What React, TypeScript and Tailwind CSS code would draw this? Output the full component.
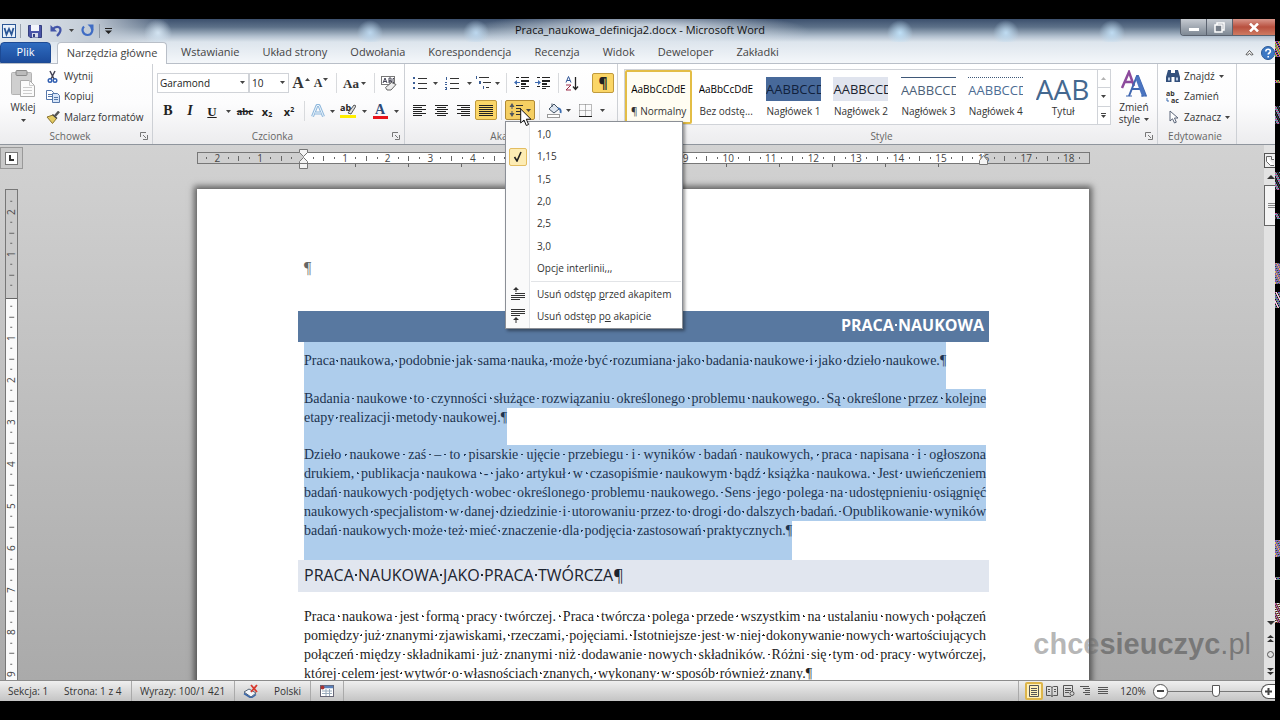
import { Fragment, type ReactNode } from 'react'
import clsx from 'clsx'

const tabs = ['Wstawianie', 'Układ strony', 'Odwołania', 'Korespondencja', 'Recenzja', 'Widok', 'Deweloper', 'Zakładki']

const spacings = ['1,0', '1,15', '1,5', '2,0', '2,5', '3,0']

interface StyleItem {
    name: string
    sample: string
    sampleClass: string
    selected?: boolean
}

const styleItems: StyleItem[] = [
    { name: '¶ Normalny', sample: 'AaBbCcDdE', sampleClass: 'text-[10px] text-black', selected: true },
    { name: 'Bez odstę...', sample: 'AaBbCcDdE', sampleClass: 'text-[10px] text-black' },
    { name: 'Nagłówek 1', sample: 'AABBCCD', sampleClass: 'bg-[#47699a] text-[13px] text-[#10213c]' },
    { name: 'Nagłówek 2', sample: 'AABBCCD', sampleClass: 'bg-[#e0e4ee] text-[13px] text-[#1c2430]' },
    { name: 'Nagłówek 3', sample: 'AABBCCD', sampleClass: 'border-t border-[#3f5878] text-[13px] text-[#4c5f78]' },
    { name: 'Nagłówek 4', sample: 'AABBCCD', sampleClass: 'border-t border-dotted border-[#3f5878] text-[13px] text-[#4c6d94]' },
    { name: 'Tytuł', sample: 'AAB', sampleClass: 'text-[28px] text-[#44688f]' },
]

function Caret({ className }: { className?: string }) {
    return (
        <svg viewBox="0 0 5 3" className={clsx('h-[3px] w-[5px] shrink-0', className)} fill="#444">
            <path d="M0 0h5L2.5 3z" />
        </svg>
    )
}

function Drop({ label, className = 'w-2' }: { label: string; className?: string }) {
    return (
        <button aria-label={label} className={clsx('flex h-5 shrink-0 items-center justify-center', className)}>
            <Caret />
        </button>
    )
}

function Sep({ className }: { className: string }) {
    return (
        <span className={clsx('flex h-5 shrink-0 justify-center', className)}>
            <span className="w-px bg-[#d8dadd]" />
        </span>
    )
}

function Tool({ label, className, children }: { label: string; className: string; children: ReactNode }) {
    return (
        <button aria-label={label} className={clsx('flex h-5 shrink-0 items-center justify-center leading-none', className)}>
            {children}
        </button>
    )
}

function Launcher() {
    return (
        <svg viewBox="0 0 8 8" className="h-2 w-2" fill="none" stroke="#777">
            <path d="M.5 5V.5H6M3 3l3 3M7.5 3v4.5H3" />
        </svg>
    )
}

function Group({ name, className, launcher, children }: { name: string; className: string; launcher?: boolean; children: ReactNode }) {
    return (
        <section aria-label={name} className={clsx('flex flex-col border-r border-[#cdd0d5]', className)}>
            <div className="flex min-h-0 flex-1">{children}</div>
            <div className="flex h-4 items-center pr-1">
                <span className="flex-1 text-center text-[#666]">{name}</span>
                {launcher && <button aria-label={`${name} – opcje`}><Launcher /></button>}
            </div>
        </section>
    )
}

// rows of text drawn as horizontal bars: [x, y, width]
function Bars({ rows, color = '#222' }: { rows: number[][]; color?: string }) {
    return (
        <svg viewBox="0 0 16 14" className="h-[14px] w-4" fill={color}>
            {rows.map(([x, y, w]) => <rect key={y} x={x} y={y} width={w} height="1" />)}
        </svg>
    )
}

const alignRows = {
    left: [[1, 2, 13], [1, 4, 9], [1, 6, 13], [1, 8, 9], [1, 10, 13], [1, 12, 9]],
    center: [[1, 2, 13], [3, 4, 9], [1, 6, 13], [3, 8, 9], [1, 10, 13], [3, 12, 9]],
    right: [[1, 2, 13], [5, 4, 9], [1, 6, 13], [5, 8, 9], [1, 10, 13], [5, 12, 9]],
    justify: [[1, 2, 14], [1, 4, 14], [1, 6, 14], [1, 8, 14], [1, 10, 14], [1, 12, 14]],
}

function TitleBar() {
    return (
        <header className="flex h-[23px] shrink-0 bg-[radial-gradient(circle_at_158px_14px,#d3e4f2_0,transparent_14px),radial-gradient(circle_at_370px_14px,#bcd7ee_0,transparent_13px),radial-gradient(circle_at_476px_14px,#bcd7ee_0,transparent_13px),radial-gradient(circle_at_900px_14px,#bfe0f7_0,transparent_13px),radial-gradient(circle_at_1006px_14px,#bfdcf2_0,transparent_13px),radial-gradient(circle_at_1112px_14px,#bfdcf2_0,transparent_13px),radial-gradient(ellipse_170px_20px_at_640px_12px,#dfe7efcc_30%,transparent),linear-gradient(to_right,#e4eaf0_0,#c3ccd6_90px,transparent_170px),linear-gradient(to_bottom,#3c506d_0,#5d7189_35%,#b1bfce_75%,#dde5ed)]">
            <div className="flex items-center pl-[2px]">
                <svg viewBox="0 0 14 14" className="h-[14px] w-[14px]">
                    <rect x=".5" y=".5" width="13" height="13" fill="#e9f1fa" stroke="#2b5797" />
                    <path d="M2.500 4l2 6.500L7 5l2.500 5.500L11.500 4" fill="none" stroke="#2b5797" strokeWidth="1.800" />
                </svg>
                <span className="mx-1 h-[14px] w-px bg-[#9aa3af]" />
                <button aria-label="Zapisz" className="ml-[3px]">
                    <svg viewBox="0 0 14 14" className="h-[14px] w-[14px]">
                        <path d="M.5 1.500h13v12H2l-1.500-1.500z" fill="#4b55a8" stroke="#35407f" />
                        <rect x="3" y="1" width="8" height="6" fill="#f3f5fb" />
                        <rect x="4" y="9" width="6" height="4.500" fill="#d8dcec" />
                        <rect x="5" y="10" width="2" height="3" fill="#35407f" />
                    </svg>
                </button>
                <button aria-label="Cofnij" className="ml-2">
                    <svg viewBox="0 0 13 13" className="h-[13px] w-[13px]" fill="none" stroke="#4355a8" strokeWidth="2.200">
                        <path d="M3 5C5 2 10.500 2 10.500 6c0 2.500-1.500 4-3.500 6" />
                        <path d="M.5 1v6.500H7z" fill="#4355a8" stroke="none" />
                    </svg>
                </button>
                <Drop label="Lista cofania" className="ml-1 w-2" />
                <button aria-label="Powtórz" className="ml-[6px]">
                    <svg viewBox="0 0 13 13" className="h-[13px] w-[13px]" fill="none" stroke="#3f6cc4" strokeWidth="2.200">
                        <path d="M3 2.500c-3 3-1 8.500 3.500 8.500s6-5 3.500-8" />
                        <path d="M6.500.5h6v6z" fill="#3f6cc4" stroke="none" />
                    </svg>
                </button>
                <span className="mx-[5px] h-[14px] w-px bg-[#8d97a5]" />
                <svg viewBox="0 0 7 6" className="h-[6px] w-[7px]" fill="#222">
                    <path d="M0 0h7v1H0zM0 2.500h7L3.500 6z" />
                </svg>
            </div>
            <h1 className="flex-1 pr-3 text-center text-[11px] leading-[22px] text-[#111]">Praca_naukowa_definicja2.docx - Microsoft Word</h1>
            <div className="flex h-[17px] overflow-hidden rounded-bl border-b border-l border-[#5b6370]">
                <button aria-label="Minimalizuj" className="flex w-[26px] items-end justify-center border-r border-[#5b6370] bg-linear-to-b from-[#c5cad1] to-[#7f8995] pb-[4px]">
                    <span className="h-[3px] w-[10px] bg-white" />
                </button>
                <button aria-label="Przywróć" className="flex w-[26px] items-center justify-center border-r border-[#5b6370] bg-linear-to-b from-[#c5cad1] to-[#7f8995]">
                    <svg viewBox="0 0 11 11" className="h-[11px] w-[11px]" fill="#777f8a" stroke="#fff" strokeWidth="1.500">
                        <rect x="3" y="1" width="7" height="7" />
                        <rect x="1" y="3" width="7" height="7" />
                    </svg>
                </button>
                <button aria-label="Zamknij" className="flex w-[42px] items-center justify-center bg-linear-to-b from-[#d9978c] via-[#b8503f] to-[#cf7a62]">
                    <svg viewBox="0 0 10 9" className="h-[9px] w-[10px]" stroke="#fff" strokeWidth="2.500">
                        <path d="M1 .5l8 8M9 .5l-8 8" />
                    </svg>
                </button>
            </div>
        </header>
    )
}

function TabRow() {
    return (
        <nav className="flex h-[22px] shrink-0 items-stretch border-b border-[#b9bfc8] bg-linear-to-b from-[#dde5ed] to-[#f4f7fa] text-[#444]">
            <button className="w-[51px] rounded-t-sm border border-[#1d4a94] bg-linear-to-b from-[#2f6cc0] to-[#1c4c9c] text-white">Plik</button>
            <button className="-mb-px ml-[6px] w-[110px] rounded-t-sm border border-b-0 border-[#b9bfc8] bg-white">Narzędzia główne</button>
            <div className="ml-[3px] flex flex-1 gap-px">
                {tabs.map(tab => <button key={tab} className="px-[11px]">{tab}</button>)}
            </div>
            <button aria-label="Minimalizuj wstążkę" className="mr-[7px]">
                <svg viewBox="0 0 9 7" className="h-[7px] w-[9px]" fill="#fff" stroke="#555">
                    <path d="M1 5.500L4.500 1.500 8 5.500 6.500 6 4.500 4.500 2.500 6z" />
                </svg>
            </button>
            <button aria-label="Pomoc" className="w-[14px] overflow-hidden">
                <svg viewBox="0 0 14 14" className="h-[14px] w-[14px]">
                    <circle cx="7" cy="7" r="6.500" fill="#3c78c4" stroke="#2b5a98" />
                    <path d="M4.800 5.500c0-3 4.600-2.800 4.600-.2C9.400 7 7.200 7 7.200 8.500M7.200 10v1.600" fill="none" stroke="#fff" strokeWidth="1.600" />
                </svg>
            </button>
        </nav>
    )
}

function Clipboard() {
    return (
        <Group name="Schowek" className="w-[153px]" launcher>
            <button className="flex w-[46px] flex-col items-center pt-[5px]">
                <svg viewBox="0 0 26 28" className="h-7 w-[26px]">
                    <rect x="1.500" y="3.500" width="20" height="22" rx="1" fill="#cfcfcf" stroke="#b3b3b3" />
                    <rect x="6" y="1.500" width="11" height="5" rx="1" fill="#bbb" stroke="#888" />
                    <path d="M10.500 11.500h9l5 5v11h-14z" fill="#fbfbfb" stroke="#aaa" />
                    <path d="M19.500 11.500v5h5M13 18.500h9M13 21.500h9M13 24.500h9" fill="none" stroke="#ccc" />
                </svg>
                <span className="mt-[2px] leading-4">Wklej</span>
                <Caret className="mt-1" />
            </button>
            <div className="flex flex-col pt-[2px]">
                <button className="flex h-5 items-center gap-[5px]">
                    <svg viewBox="0 0 13 13" className="h-[13px] w-[13px]" fill="none">
                        <path d="M4 1l4 8M9 1L5 9" stroke="#445" strokeWidth="1.500" />
                        <circle cx="4" cy="10.500" r="1.800" stroke="#2f5db0" strokeWidth="1.400" />
                        <circle cx="9" cy="10.500" r="1.800" stroke="#2f5db0" strokeWidth="1.400" />
                    </svg>
                    Wytnij
                </button>
                <button className="flex h-[21px] items-center gap-1">
                    <svg viewBox="0 0 14 13" className="h-[13px] w-[14px]" fill="#fff" stroke="#5577aa">
                        <path d="M.5.5h5l2 2v7h-7zM2 4.500h4M2 6.500h4" />
                        <path d="M6.500 3.500h5l2 2v7h-7zM8 7.500h4M8 9.500h4" fill="#d7e5f8" />
                    </svg>
                    Kopiuj
                </button>
                <button className="flex h-5 items-center gap-1">
                    <svg viewBox="0 0 14 13" className="h-[13px] w-[14px]">
                        <path d="M9 5l4-4.500" stroke="#555" strokeWidth="2.500" />
                        <path d="M1 6l6-2 3.500 3.500-4 5z" fill="#e4cb62" stroke="#8a7430" />
                        <path d="M6.500 3.500l4.500 4" stroke="#444" strokeWidth="1.500" />
                    </svg>
                    Malarz formatów
                </button>
            </div>
        </Group>
    )
}

function Combo({ label, value, className }: { label: string; value: string; className: string }) {
    return (
        <div className={clsx('relative', className)}>
            <select aria-label={label} className="h-5 w-full appearance-none border border-[#d0d3d8] bg-white pl-[2px] leading-none text-[#222]">
                <option>{value}</option>
            </select>
            <Caret className="pointer-events-none absolute top-2 right-1" />
        </div>
    )
}

function FontGroup() {
    return (
        <Group name="Czcionka" className="w-[252px]" launcher>
            <div className="flex flex-col pl-1">
                <div className="flex pt-[9px]">
                    <Combo label="Czcionka" value="Garamond" className="w-[92px]" />
                    <Combo label="Rozmiar czcionki" value="10" className="w-10" />
                    <Tool label="Zwiększ czcionkę" className="w-6 gap-px font-['Liberation_Serif',serif] text-base font-bold text-[#333]">
                        A<Caret className="mb-2 rotate-180" />
                    </Tool>
                    <Tool label="Zmniejsz czcionkę" className="w-4 gap-px font-['Liberation_Serif',serif] text-xs font-bold text-[#333]">
                        A<Caret className="mb-2" />
                    </Tool>
                    <Sep className="w-[14px]" />
                    <Tool label="Zmień wielkość liter" className="w-4 font-['Liberation_Serif',serif] text-[13px] font-bold text-[#333]">Aa</Tool>
                    <Drop label="Wielkość liter" />
                    <Sep className="w-[14px]" />
                    <Tool label="Wyczyść formatowanie" className="w-4">
                        <svg viewBox="0 0 16 15" className="h-[15px] w-4" fill="none" stroke="#445">
                            <rect x=".5" y=".5" width="13" height="8" fill="#fff" stroke="#777" />
                            <path d="M2 7l2-5 2 5M3 5.500h2M8 2v5h2.500v-2H8h2V2zM13 2.500h-1v4h1" />
                            <path d="M4.500 11.500l6-5 4.500 2-5 5.500H6z" fill="#eee" stroke="#666" />
                        </svg>
                    </Tool>
                </div>
                <div className="flex pt-2 text-[#222]">
                    <Tool label="Pogrubienie" className="w-[22px] font-['Liberation_Serif',serif] text-sm font-bold">B</Tool>
                    <Tool label="Kursywa" className="w-[22px] font-['Liberation_Serif',serif] text-sm font-bold italic">I</Tool>
                    <Tool label="Podkreślenie" className="w-[22px] font-['Liberation_Serif',serif] text-[13px] font-bold underline">U</Tool>
                    <Drop label="Styl podkreślenia" className="w-[11px]" />
                    <Tool label="Przekreślenie" className="w-[22px] font-['Liberation_Serif',serif] text-[11px] font-bold line-through">abc</Tool>
                    <Tool label="Indeks dolny" className="w-[22px] text-[11px] font-bold"><span>x<sub className="text-[7px]">2</sub></span></Tool>
                    <Tool label="Indeks górny" className="w-[22px] text-[11px] font-bold"><span>x<sup className="text-[7px]">2</sup></span></Tool>
                    <Sep className="w-2" />
                    <Tool label="Efekty tekstowe" className="w-5">
                        <svg viewBox="0 0 14 14" className="h-[14px] w-[14px]" fill="none" strokeLinejoin="round">
                            <path d="M1.500 12.500L6 1.500h2l4.500 11M4 9h6" stroke="#8fb8dc" strokeWidth="3" />
                            <path d="M1.500 12.500L6 1.500h2l4.500 11M4 9h6" stroke="#eef6fd" />
                        </svg>
                    </Tool>
                    <Drop label="Lista efektów" />
                    <Tool label="Kolor wyróżnienia" className="w-6">
                        <svg viewBox="0 0 16 16" className="h-4 w-4">
                            <rect y="12" width="16" height="3" fill="#ffee00" />
                            <text x="0" y="8" fontSize="9" fontWeight="bold" fill="#222">ab</text>
                            <path d="M8 10l6-8 2 1-5 8z" fill="#ddd" stroke="#555" />
                        </svg>
                    </Tool>
                    <Drop label="Lista kolorów wyróżnienia" />
                    <Tool label="Kolor czcionki" className="w-6">
                        <span className="flex h-4 w-[15px] items-start justify-center border-b-3 border-[#e8141c] font-['Liberation_Serif',serif] text-sm leading-[13px] font-bold text-[#2c4a78]">A</span>
                    </Tool>
                    <Drop label="Lista kolorów czcionki" />
                </div>
            </div>
        </Group>
    )
}

function IndentIcon({ out }: { out?: boolean }) {
    return (
        <svg viewBox="0 0 16 14" className="h-[14px] w-4" fill="#222">
            <path d="M2 1h3v1H2zM7 1h8v1H7zM7 4h8v2H7zM7 7h5v2H7zM2 10h3v1H2zM7 10h8v1H7zM7 12h4v1H7z" />
            <path d={out ? 'M0 6.500L3 4v2h3v1H3v2z' : 'M6 6.500L3 4v2H0v1h3v2z'} fill="#3c6ab0" />
        </svg>
    )
}

function LineSpacingIcon() {
    return (
        <svg viewBox="0 0 14 14" className="h-[14px] w-[14px]" fill="#333">
            <path d="M3 0l2.500 4h-2v2h-1V4h-2zM3 14l2.500-4h-2V8h-1v2h-2z" fill="#4d5560" />
            <path d="M7 2h7v1H7zM7 5h5v1H7zM7 8h7v1H7zM7 11h5v1H7z" />
        </svg>
    )
}

function SpacingMenu() {
    return (
        <div role="menu" className="absolute top-[21px] left-0 z-20 flex w-[178px] flex-col border border-[#8b8f96] bg-[linear-gradient(to_right,#fafafa_23px,#e2e4e7_23px,#e2e4e7_24px,#fff_24px)] px-px pt-px pb-px whitespace-nowrap text-[#333] shadow-[2px_2px_3px_#0006]">
            <div className="flex h-[157px] flex-col">
                {spacings.map(value => (
                    <button key={value} role="menuitemradio" aria-checked={value === '1,15'} className="flex flex-1 items-center">
                        <span className={clsx('ml-[2px] flex h-[18px] w-[18px] items-center justify-center', value === '1,15' && 'rounded-xs border border-[#e3bd61] bg-[#fdecb4]')}>
                            {value === '1,15' && (
                                <svg viewBox="0 0 10 11" className="h-[11px] w-[10px]" fill="none" stroke="#222" strokeWidth="1.600">
                                    <path d="M1.500 6l2.500 4 4-9" />
                                </svg>
                            )}
                        </span>
                        <span className="ml-[10px]">{value}</span>
                    </button>
                ))}
                <button role="menuitem" className="flex flex-1 items-center pl-[30px]">Opcje interlinii,,,</button>
            </div>
            <hr className="my-px ml-6 border-[#e2e4e7]" />
            <button role="menuitem" className="flex h-[22px] items-center">
                <svg viewBox="0 0 14 14" className="ml-1 h-[14px] w-[14px] shrink-0" fill="#333">
                    <path d="M5 0l3 3H5.500v2h-1V3H2zM4 6h10v1H4zM0 8h14v1H0zM0 10h14v1H0zM0 12h9v1H0z" />
                </svg>
                <span className="ml-3">Usuń odstęp <u>p</u>rzed akapitem</span>
            </button>
            <button role="menuitem" className="flex h-[22px] items-center">
                <svg viewBox="0 0 14 14" className="ml-1 h-[14px] w-[14px] shrink-0" fill="#333">
                    <path d="M0 0h14v1H0zM0 2h14v1H0zM0 4h14v1H0zM0 6h9v1H0zM5 8l3 3H5.500v3h-1v-3H2z" />
                </svg>
                <span className="ml-3">Usuń odstęp p<u>o</u> akapicie</span>
            </button>
        </div>
    )
}

function ParagraphGroup() {
    return (
        <Group name="Akapit" className="w-[213px]" launcher>
            <div className="flex flex-col pl-1">
                <div className="flex pt-[9px]">
                    <Tool label="Punktory" className="w-[22px]">
                        <svg viewBox="0 0 14 13" className="h-[13px] w-[14px]" fill="#333">
                            <path d="M5 1h9v1H5zM5 6h9v1H5zM5 11h9v1H5z" />
                            <path d="M0 0h2v2H0zM0 5h2v2H0zM0 10h2v2H0z" fill="#3c5f96" />
                        </svg>
                    </Tool>
                    <Drop label="Lista punktorów" />
                    <Tool label="Numerowanie" className="w-[26px]">
                        <svg viewBox="0 0 14 13" className="h-[13px] w-[14px]" fill="#333">
                            <path d="M5 1h9v1H5zM5 6h9v1H5zM5 11h9v1H5z" />
                            <path d="M1 0h1v3H1zM0 5h2v1H1v1h1v1H0V7h1V6H0zM0 10h2v3H0v-1h1v-1H0z" fill="#3c5f96" />
                        </svg>
                    </Tool>
                    <Drop label="Lista numerowania" />
                    <Tool label="Lista wielopoziomowa" className="w-5">
                        <svg viewBox="0 0 16 14" className="h-[14px] w-4" fill="#333">
                            <path d="M4 1h10v1H4zM8 6h8v1H8zM11 11h3v1h-3z" />
                            <path d="M1 0h1v3H1zM4 5h2v3H4zM8 10h1v3H8z" fill="#3c5f96" />
                        </svg>
                    </Tool>
                    <Drop label="Listy wielopoziomowe" />
                    <Sep className="w-[10px]" />
                    <Tool label="Zmniejsz wcięcie" className="w-[22px]"><IndentIcon out /></Tool>
                    <Tool label="Zwiększ wcięcie" className="w-5"><IndentIcon /></Tool>
                    <Sep className="w-[10px]" />
                    <Tool label="Sortuj" className="w-[18px]">
                        <svg viewBox="0 0 14 15" className="h-[15px] w-[14px]" fill="none">
                            <path d="M1 6.500L3.500.5 6 6.500M2 4.500h3" stroke="#2f5597" />
                            <path d="M1 9h5l-5 5h5" stroke="#9c2f4a" />
                            <path d="M10.500 1v12M8 10.500l2.500 3 2.500-3" stroke="#222" strokeWidth="1.300" />
                        </svg>
                    </Tool>
                    <Tool label="Pokaż wszystko" className="ml-[11px] w-[22px] rounded-xs border border-[#c09a3d] bg-[#fbd667] text-sm font-bold text-[#222]">¶</Tool>
                </div>
                <div className="flex pt-[7px]">
                    <Tool label="Wyrównaj do lewej" className="w-[22px]"><Bars rows={alignRows.left} /></Tool>
                    <Tool label="Wyśrodkuj" className="w-[22px]"><Bars rows={alignRows.center} /></Tool>
                    <Tool label="Wyrównaj do prawej" className="w-[22px]"><Bars rows={alignRows.right} /></Tool>
                    <Tool label="Wyjustuj" className="w-[22px] rounded-xs border border-[#c09a3d] bg-[#fbd667]"><Bars rows={alignRows.justify} /></Tool>
                    <Sep className="w-2" />
                    <div className="relative">
                        <Tool label="Interlinia" className="w-[30px] gap-[3px] rounded-xs border border-[#b08a35] bg-[#f5cf62]">
                            <LineSpacingIcon />
                            <Caret />
                        </Tool>
                        <SpacingMenu />
                        <svg viewBox="0 0 12 19" className="absolute top-2 left-[15px] z-30 h-[19px] w-3" fill="#fff" stroke="#111">
                            <path d="M.7 1v14l3.300-3 2.300 5.500 2.300-1-2.300-5.300h4.600z" />
                        </svg>
                    </div>
                    <Sep className="w-[9px]" />
                    <Tool label="Cieniowanie" className="w-5">
                        <svg viewBox="0 0 16 15" className="h-[15px] w-4">
                            <path d="M3 6l5-5 5 5-5 4z" fill="#dfe6f0" stroke="#456" />
                            <path d="M12 5c3 1 3 3 2.500 5" fill="none" stroke="#3a6cb0" strokeWidth="1.800" />
                            <path d="M6 4V.5" stroke="#456" />
                            <rect x="1.500" y="11.500" width="12" height="3" fill="#fff" stroke="#999" />
                        </svg>
                    </Tool>
                    <Drop label="Lista cieniowania" />
                    <Tool label="Krawędzie" className="w-[26px]">
                        <svg viewBox="0 0 13 13" className="h-[13px] w-[13px]" fill="none" stroke="#777" strokeDasharray="1 1">
                            <path d="M.5.5h12M.5 6.500h12M.5.5v12M6.500.5v12M12.500.5v12" />
                            <path d="M0 12.500h13" stroke="#222" strokeDasharray="none" />
                        </svg>
                    </Tool>
                    <Drop label="Lista krawędzi" />
                </div>
            </div>
        </Group>
    )
}

function StylesGroup() {
    return (
        <Group name="Style" className="min-w-0 flex-1" launcher>
            <div className="mt-[5px] ml-[6px] flex h-[56px] min-w-0 flex-1 border border-[#d0d3d8] bg-white">
                {styleItems.map(item => (
                    <button
                        key={item.name}
                        className={clsx(
                            'flex min-w-0 flex-1 flex-col items-center rounded-xs border-2 pt-[5px]',
                            item.selected ? 'border-[#e3bd45] bg-[#fffdf2]' : 'border-transparent',
                        )}
                    >
                        <span className={clsx('h-6 w-[55px] overflow-hidden text-left leading-[24px] whitespace-nowrap', item.sampleClass)}>
                            {item.sample}
                        </span>
                        <span className="mt-[2px] leading-4 whitespace-nowrap">{item.name}</span>
                    </button>
                ))}
                <div className="flex w-[13px] flex-col border-l border-[#d0d3d8]">
                    <button aria-label="Wiersz w górę" className="flex flex-1 items-center justify-center"><Caret className="rotate-180 opacity-40" /></button>
                    <button aria-label="Wiersz w dół" className="flex flex-1 items-center justify-center border-y border-[#d0d3d8]"><Caret /></button>
                    <button aria-label="Więcej" className="flex flex-1 flex-col items-center justify-center gap-px">
                        <span className="h-px w-[5px] bg-[#444]" />
                        <Caret />
                    </button>
                </div>
            </div>
            <button className="flex w-[46px] flex-col items-center pt-[6px]">
                <svg viewBox="0 0 28 28" className="h-7 w-7" fill="none">
                    <path d="M2 18L9 2l5 14M4 12h9" stroke="#8c4a9c" strokeWidth="2.500" />
                    <path d="M9 26l8-20h1l8 20M12 19h11" stroke="#3f66b0" strokeWidth="2" />
                    <path d="M17 7l7 19" stroke="#4a74c0" strokeWidth="4" />
                    <path d="M6 26h6M21 26h6" stroke="#3f66b0" />
                </svg>
                <span className="mt-[3px] leading-3">Zmień</span>
                <span className="flex items-center gap-1 leading-3">style <Caret /></span>
            </button>
        </Group>
    )
}

function EditGroup() {
    return (
        <Group name="Edytowanie" className="w-[79px]">
            <div className="flex flex-col pt-[2px] pl-2">
                <button className="flex h-5 items-center gap-1">
                    <svg viewBox="0 0 14 12" className="h-3 w-[14px]" fill="#33507c">
                        <path d="M2 0h3v3h4V0h3l2 7v5H8.500V7h-3v5H0V7z" />
                        <path d="M2 7.500h2v3H2zM10 7.500h2v3h-2z" fill="#b9cbe4" />
                    </svg>
                    Znajdź <Caret />
                </button>
                <button className="flex h-[21px] items-center gap-1">
                    <svg viewBox="0 0 14 14" className="h-[14px] w-[14px]" fill="#333">
                        <text x="0" y="6" fontSize="7" fontWeight="bold">ab</text>
                        <text x="5" y="13" fontSize="7" fontWeight="bold">ac</text>
                        <path d="M1 8v3h2" fill="none" stroke="#3a6cb0" />
                    </svg>
                    Zamień
                </button>
                <button className="flex h-5 items-center gap-1">
                    <svg viewBox="0 0 14 14" className="h-[14px] w-[14px]" fill="#fff" stroke="#5a6478">
                        <path d="M4 1v10l2.500-2.200L8.500 13l1.800-.8L8.500 8H12z" />
                    </svg>
                    Zaznacz <Caret />
                </button>
            </div>
        </Group>
    )
}

function rulerMark(quarter: number) {
    // quarters of a centimetre counted from the margin
    if (quarter % 4 === 0) return quarter === 0 ? '' : String(Math.abs(quarter / 4))
    return quarter % 2 === 0 ? 'half' : 'dot'
}

function RulerMarks({ from, count, vertical }: { from: number; count: number; vertical?: boolean }) {
    return (
        <>
            {Array.from({ length: count }, (_, i) => {
                const mark = rulerMark(from + i)
                return (
                    <span key={i} className={clsx('flex min-h-0 min-w-0 flex-1 items-center justify-center', vertical && '-rotate-90')}>
                        {mark === 'half' && <span className="h-[5px] w-px shrink-0 bg-[#666]" />}
                        {mark === 'dot' && <span className="h-[2px] w-px shrink-0 bg-[#666]" />}
                        {mark !== 'half' && mark !== 'dot' && <span className="text-[10px] leading-[10px]">{mark}</span>}
                    </span>
                )
            })}
        </>
    )
}

function HorizontalRuler() {
    return (
        <div className="relative mx-auto mt-[7px] w-[893px] shrink-0">
            <div className="flex h-3 border border-[#777] bg-[linear-gradient(to_right,#cfcfcf_106px,#fff_106px,#fff_786px,#cfcfcf_786px)] px-1 text-[#444]">
                <RulerMarks from={-9} count={83} />
            </div>
            <div className="ml-[106px] h-[3px] w-[680px] bg-[repeating-linear-gradient(to_right,transparent_0,transparent_52px,#666_52px,#666_53px)]" />
            <svg viewBox="0 0 9 20" className="absolute -top-[3px] left-[102px] h-5 w-[9px]" fill="#f4f4f4" stroke="#777">
                <path d="M.5.5h8v3l-4 4-4-4zM4.500 8.500l4 4v7h-8v-7zM.5 14.500h8" />
            </svg>
            <svg viewBox="0 0 9 12" className="absolute top-[3px] right-[102px] h-3 w-[9px]" fill="#f4f4f4" stroke="#777">
                <path d="M4.500.5l4 5v4h-8v-4z" />
            </svg>
        </div>
    )
}

// a space with a formatting dot in the middle of it
function Words({ children }: { children: string }) {
    return (
        <>
            {children.split(' ').map((word, i) => (
                <Fragment key={i}>
                    {i > 0 && <span className="bg-[radial-gradient(circle_at_center,currentColor_1px,transparent_1px)]"> </span>}
                    {word}
                </Fragment>
            ))}
        </>
    )
}

function Paragraph({ lines, selected, lastClass }: { lines: string[]; selected?: boolean; lastClass: string }) {
    return (
        <p className={clsx('font-["Liberation_Serif",serif] text-[14px] leading-[19px] whitespace-nowrap [text-align-last:justify]', selected ? 'text-[#1d3450]' : 'text-[#222]')}>
            {lines.map((line, i) => (
                <span key={line} className={clsx('block', i === lines.length - 1 && lastClass, selected && 'bg-[#aecdec]')}>
                    <Words>{line}</Words>
                    {i === lines.length - 1 && '¶'}
                </span>
            ))}
        </p>
    )
}

function Page() {
    return (
        <article className="mx-auto mt-[22px] w-[892px] shrink-0 bg-white pr-[103px] pl-[107px] shadow-[0_0_6px_3px_#0008]">
            <p className="pt-[68px] font-['Liberation_Serif',serif] text-base leading-[22px] text-[#666]">¶</p>
            <h2 className="mt-8 -mr-[3px] -ml-[6px] h-[31px] bg-[#5878a0] pr-[5px] text-right text-base leading-[29px] font-bold text-white">
                <Words>PRACA NAUKOWA</Words>
            </h2>
            <Paragraph selected lastClass="w-[642px] pt-[9px] pb-[19px]" lines={['Praca naukowa, podobnie jak sama nauka, może być rozumiana jako badania naukowe i jako dzieło naukowe.']} />
            <Paragraph
                selected
                lastClass="w-[203px] pb-[18px]"
                lines={[
                    'Badania naukowe to czynności służące rozwiązaniu określonego problemu naukowego. Są określone przez kolejne',
                    'etapy realizacji metody naukowej.',
                ]}
            />
            <Paragraph
                selected
                lastClass="w-[488px] pb-5"
                lines={[
                    'Dzieło naukowe zaś – to pisarskie ujęcie przebiegu i wyników badań naukowych, praca napisana i ogłoszona',
                    'drukiem, publikacja naukowa - jako artykuł w czasopiśmie naukowym bądź książka naukowa. Jest uwieńczeniem',
                    'badań naukowych podjętych wobec określonego problemu naukowego. Sens jego polega na udostępnieniu osiągnięć',
                    'naukowych specjalistom w danej dziedzinie i utorowaniu przez to drogi do dalszych badań. Opublikowanie wyników',
                    'badań naukowych może też mieć znaczenie dla podjęcia zastosowań praktycznych.',
                ]}
            />
            <h3 className="-mr-[3px] -ml-[6px] mb-[15px] h-8 bg-[#e1e6ef] pl-[6px] text-base leading-[30px] text-[#1c2430]">
                <Words>PRACA NAUKOWA JAKO PRACA TWÓRCZA</Words>¶
            </h3>
            <Paragraph
                lastClass="w-[508px]"
                lines={[
                    'Praca naukowa jest formą pracy twórczej. Praca twórcza polega przede wszystkim na ustalaniu nowych połączeń',
                    'pomiędzy już znanymi zjawiskami, rzeczami, pojęciami. Istotniejsze jest w niej dokonywanie nowych wartościujących',
                    'połączeń między składnikami już znanymi niż dodawanie nowych składników. Różni się tym od pracy wytwórczej,',
                    'której celem jest wytwór o własnościach znanych, wykonany w sposób również znany.',
                ]}
            />
        </article>
    )
}

function ScrollBar() {
    return (
        <div className="flex w-[11px] shrink-0 flex-col items-end overflow-hidden bg-[#e2e2e2]">
            <button aria-label="Linijka" className="mt-[8px] flex h-[15px] w-[11px] items-center border border-r-0 border-[#555] bg-[#eee] pl-px">
                <svg viewBox="0 0 8 10" className="h-[10px] w-2" fill="#fff" stroke="#666"><path d="M.5.5h5v3h6M.5.5v5l4 4h4" /></svg>
            </button>
            <button aria-label="Przewiń w górę" className="flex h-[17px] w-2 items-center">
                <svg viewBox="0 0 8 4" className="h-1 w-2" fill="#333"><path d="M0 4l4-4 4 4z" /></svg>
            </button>
            <button aria-label="Suwak" className="flex h-[41px] w-[11px] flex-col items-end justify-center gap-px border border-r-0 border-[#666] bg-[#f4f4f4]">
                <span className="h-px w-[7px] bg-[#888]" />
                <span className="h-px w-[7px] bg-[#888]" />
                <span className="h-px w-[7px] bg-[#888]" />
            </button>
            <div className="flex-1" />
            <div className="flex h-[64px] flex-col justify-around">
                <svg viewBox="0 0 8 4" className="h-1 w-2" fill="#333"><path d="M0 0h8L4 4z" /></svg>
                <svg viewBox="0 0 7 7" className="h-[7px] w-[7px]" fill="#333"><path d="M0 3l3.500-3L7 3zM0 7l3.500-3L7 7z" /></svg>
                <svg viewBox="0 0 7 7" className="h-[7px] w-[7px]" fill="none" stroke="#555"><circle cx="3.500" cy="3.500" r="3" /></svg>
                <svg viewBox="0 0 7 7" className="h-[7px] w-[7px]" fill="#333"><path d="M0 0l3.500 3L7 0zM0 4l3.500 3L7 4z" /></svg>
            </div>
        </div>
    )
}

function Workspace() {
    return (
        <main className="relative flex min-h-0 flex-1 overflow-hidden bg-linear-to-b from-[#d2d2d2] to-[#aaa]">
            <div className="flex w-[22px] shrink-0 flex-col">
                <button aria-label="Tabulator" className="mt-[2px] flex h-[22px] w-[23px] shrink-0 items-center justify-center border border-[#999] bg-[#c9c9c9]">
                    <span className="flex h-[13px] w-[13px] items-center justify-center border border-[#777] bg-white">
                        <span className="h-[6px] w-[5px] border-b-2 border-l-2 border-[#333]" />
                    </span>
                </button>
                <div className="mt-5 ml-[5px] flex min-h-0 w-[13px] flex-1 flex-col border border-b-0 border-[#777] bg-[linear-gradient(to_bottom,#cacaca_108px,#666_108px,#666_109px,#fafafa_109px)] pt-[6px] text-[#444]">
                    <RulerMarks from={-9} count={46} vertical />
                </div>
            </div>
            <div className="flex min-w-0 flex-1 flex-col overflow-hidden">
                <HorizontalRuler />
                <Page />
            </div>
            <ScrollBar />
            <p className="absolute right-6 bottom-[20px] font-['Liberation_Sans',sans-serif] text-[29px] leading-8 font-bold text-[#6667]">
                chce<span className="text-[#5559]">sieuczyc</span><span className="font-normal text-[#5559]">.pl</span>
            </p>
        </main>
    )
}

function ViewIcon({ d }: { d: string }) {
    return (
        <svg viewBox="0 0 12 12" className="h-3 w-3" fill="none" stroke="#555"><path d={d} /></svg>
    )
}

function StatusBar() {
    return (
        <footer className="flex h-[21px] shrink-0 items-center border-t border-[#8c8c8c] bg-linear-to-b from-[#efefef] to-[#c4c4c4] text-[10px] text-[#333]">
            <span className="w-14 pl-2">Sekcja: 1</span>
            <span className="w-[75px] pl-2">Strona: 1 z 4</span>
            <span className="h-full w-[104px] border-x border-[#aaa] pl-2 leading-5">Wyrazy: 100/1 421</span>
            <button aria-label="Sprawdzanie" className="w-9 pl-2">
                <svg viewBox="0 0 16 14" className="h-[14px] w-4">
                    <path d="M1 8l5-3 7 4-5 4z" fill="#f4f6fa" stroke="#567" />
                    <path d="M1 9.500L8 14l5-3.500" fill="none" stroke="#3a66a8" strokeWidth="1.500" />
                    <path d="M8 1l6 7M14 1L8 8" stroke="#d8392e" strokeWidth="1.800" />
                </svg>
            </button>
            <span className="h-full w-[40px] border-r border-[#aaa] pl-[3px] leading-5">Polski</span>
            <button aria-label="Makro" className="flex h-full w-[33px] items-center justify-center border-r border-[#aaa]">
                <svg viewBox="0 0 14 12" className="h-3 w-[14px]">
                    <rect x=".5" y=".5" width="13" height="11" fill="#fff" stroke="#667" />
                    <path d="M1 2h12" stroke="#5a82bc" strokeWidth="2.500" />
                    <path d="M2 6h10M2 8.500h10M6 4v7M9.500 4v7" stroke="#9ab" />
                    <circle cx="2.500" cy="2.500" r="2" fill="#a33" />
                </svg>
            </button>
            <span className="flex-1" />
            <span className="h-full w-px bg-[#aaa]" />
            <button aria-label="Układ wydruku" className="ml-[6px] flex h-[18px] w-[18px] items-center justify-center rounded-xs border-2 border-[#ddb54a] bg-[#fff0b8]">
                <ViewIcon d="M1.500.5h9v11h-9zM3 3.500h6M3 5.500h6M3 7.500h6M3 9.500h6" />
            </button>
            <div className="ml-[3px] flex w-[63px] justify-between">
                <button aria-label="Odczyt"><ViewIcon d="M.5 1.500h4l1.500 1 1.500-1h4v9h-4L6 11.500l-1.500-1h-4zM6 2.500v9M2 4.500h2M2 6.500h2M8 4.500h2M8 6.500h2" /></button>
                <button aria-label="Układ sieci Web"><ViewIcon d="M8 11.500H.5V.5h9V6M2 3.500h6M2 5.500h6M2 7.500h4M7 8.500a2 2 0 104 0 2 2 0 10-4 0" /></button>
                <button aria-label="Konspekt"><ViewIcon d="M0 1.500h9M3 3.500h7M5 5.500h5M3 7.500h7M5 9.500h5" /></button>
                <button aria-label="Wersja robocza"><ViewIcon d="M1 2.500h10M1 4.500h10M1 6.500h10M1 8.500h10" /></button>
            </div>
            <button className="ml-[6px] w-9 text-center">120%</button>
            <button aria-label="Pomniejsz" className="ml-[2px] flex h-[15px] w-[15px] items-center justify-center rounded-full border border-[#555] bg-white">
                <span className="h-[2px] w-[7px] bg-[#444]" />
            </button>
            <input
                type="range"
                aria-label="Powiększenie"
                defaultValue={52}
                className="h-3 w-[93px] appearance-none bg-[linear-gradient(#777,#777)] bg-size-[100%_1px] bg-center bg-no-repeat [&::-webkit-slider-thumb]:h-3 [&::-webkit-slider-thumb]:w-2 [&::-webkit-slider-thumb]:appearance-none [&::-webkit-slider-thumb]:rounded-b [&::-webkit-slider-thumb]:border [&::-webkit-slider-thumb]:border-[#555] [&::-webkit-slider-thumb]:bg-white"
            />
            <button aria-label="Powiększ" className="flex h-[15px] w-[14px] items-center justify-center rounded-l-full border border-r-0 border-[#555] bg-white">
                <svg viewBox="0 0 7 7" className="h-[7px] w-[7px]" stroke="#444" strokeWidth="2"><path d="M3.500 0v7M0 3.500h7" /></svg>
            </button>
        </footer>
    )
}

const noiseBands = [[41, 57], [80, 83], [106, 124], [172, 190], [213, 219], [263, 284], [292, 308], [540, 557], [577, 580], [603, 623]]
const noiseColors = ['#c04a9a', '#4fae6a', '#e8e8e8', '#222222', '#5a54c8', '#777777', '#d8c04a', '#111111', '#6b8fd0', '#3a3a3a', '#b5553c']

function NoiseStrip() {
    return (
        <svg aria-hidden viewBox="0 0 5 720" className="h-[720px] w-[5px] shrink-0 bg-black">
            {noiseBands.flatMap(([top, bottom]) =>
                Array.from({ length: (bottom - top) * 5 }, (_, i) => (
                    <rect key={`${top}-${i}`} x={i % 5} y={top + Math.floor(i / 5)} width="1" height="1" fill={noiseColors[(i * i * 7 + i * top) % 11]} />
                )),
            )}
        </svg>
    )
}

export default function App() {
    return (
        <div className="flex h-screen overflow-hidden bg-black font-['Open_Sans',sans-serif] text-[11px] text-[#333]">
            <div className="my-[19px] flex min-w-0 flex-1 flex-col">
                <TitleBar />
                <TabRow />
                <div className="relative z-10 flex h-[81px] shrink-0 border-b border-[#8f959d] bg-linear-to-b from-white via-[#fcfcfd] to-[#ececee] text-[10px]">
                    <Clipboard />
                    <FontGroup />
                    <ParagraphGroup />
                    <StylesGroup />
                    <EditGroup />
                    <div className="w-[38px] shrink-0" />
                </div>
                <Workspace />
                <StatusBar />
            </div>
            <NoiseStrip />
        </div>
    )
}
